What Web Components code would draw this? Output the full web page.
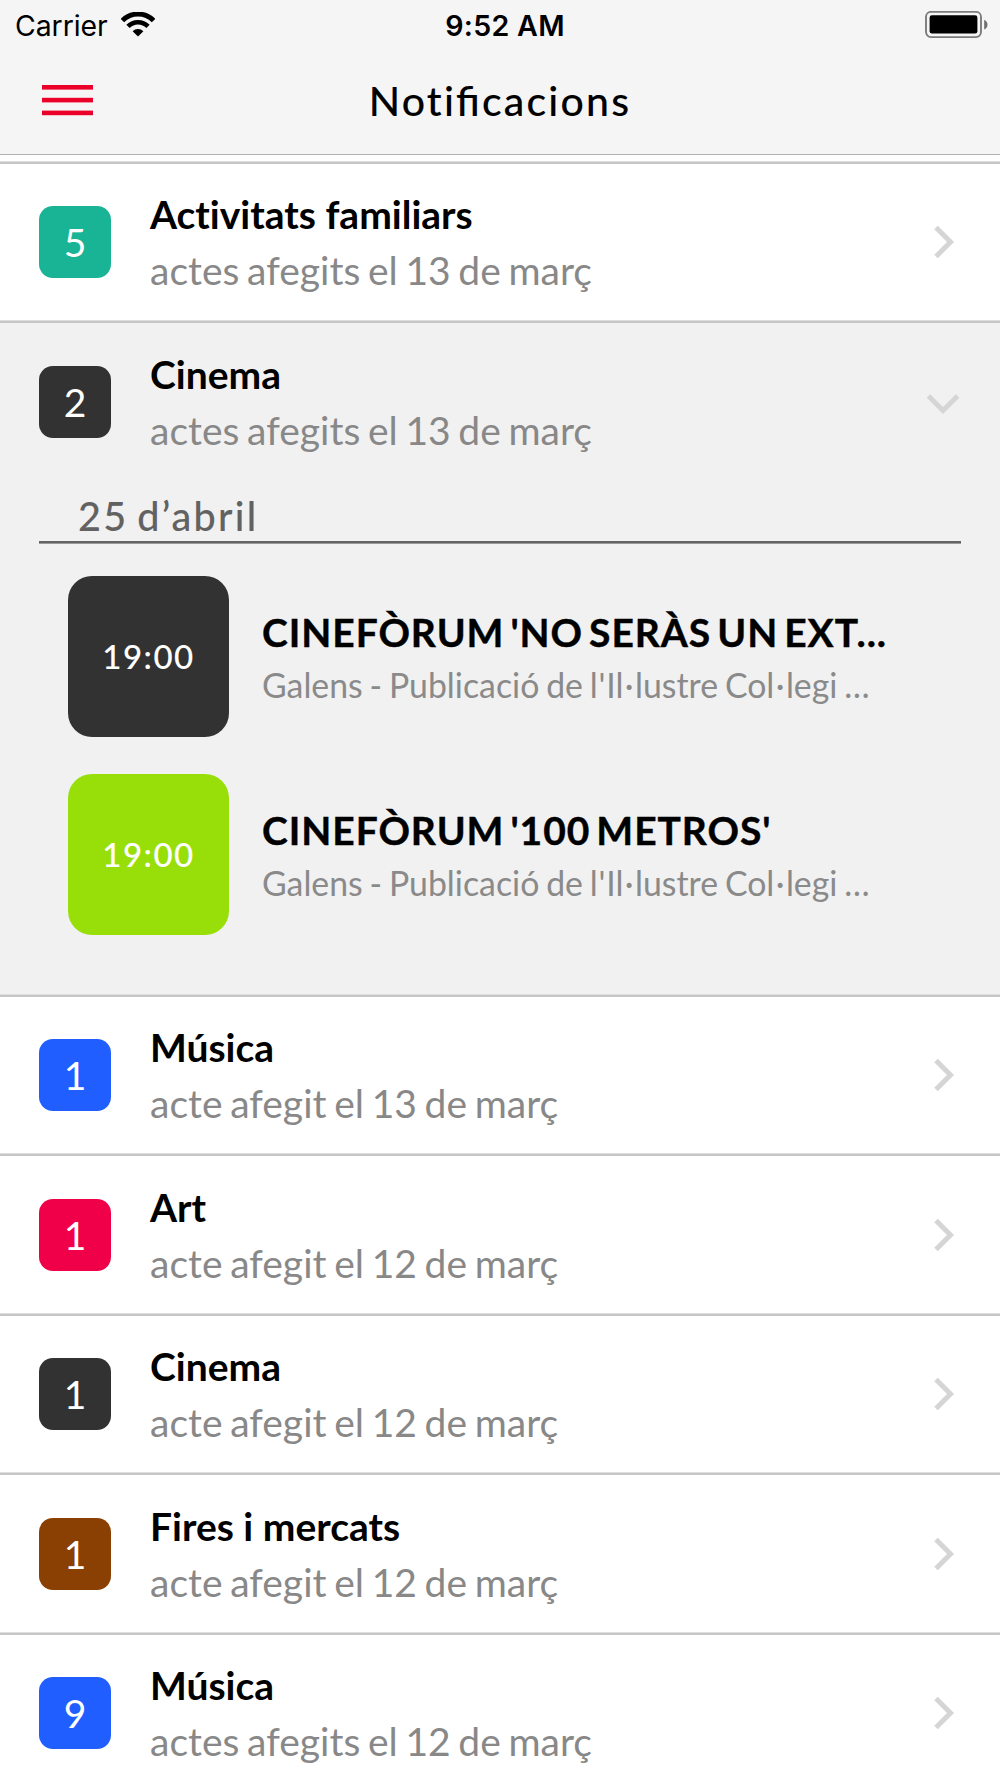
<!DOCTYPE html>
<html lang="ca">
<head>
<meta charset="UTF-8">
<meta name="viewport" content="width=device-width, initial-scale=1.0">
<title>Notificacions</title>
<style>
  body {
    margin: 0;
    height: 1778px;
    overflow: hidden;
    background: #fff;
    font-family: Lato, "Open Sans", sans-serif;
    font-feature-settings: "liga" 0, "locl" 0;
    color: #000;
  }
</style>
</head>
<body>
<app-screen>
  <status-bar slot="top" carrier="Carrier" time="9:52 AM"></status-bar>
  <nav-header slot="top">Noti<span>fi</span>cacions</nav-header>

  <notification-item count="5" color="#18b495" heading="Activitats familiars" detail="actes afegits el 13 de març"></notification-item>
  <notification-item open count="2" color="#323232" heading="Cinema" detail="actes afegits el 13 de març">
    <event-day>25 d’abril</event-day>
    <event-item time="19:00" color="#323232" heading="CINEFÒRUM 'NO SERÀS UN EXT..." place="Galens - Publicació de l'Il·lustre Col·legi …"></event-item>
    <event-item time="19:00" color="#98df0a" heading="CINEFÒRUM '100 METROS'" place="Galens - Publicació de l'Il·lustre Col·legi …"></event-item>
  </notification-item>
  <notification-item count="1" color="#205eff" heading="Música" detail="acte afegit el 13 de març"></notification-item>
  <notification-item count="1" color="#f00048" heading="Art" detail="acte afegit el 12 de març"></notification-item>
  <notification-item count="1" color="#323232" heading="Cinema" detail="acte afegit el 12 de març"></notification-item>
  <notification-item count="1" color="#8a3f03" heading="Fires i mercats" detail="acte afegit el 12 de març"></notification-item>
  <notification-item count="9" color="#205eff" heading="Música" detail="actes afegits el 12 de març"></notification-item>
</app-screen>

<script>
class AppScreen extends HTMLElement {
  constructor() {
    super();
    this.attachShadow({ mode: "open" });
    this.shadowRoot.innerHTML = `
      <style>
        :host { display: block; width: 1000px; }
        header {
          box-sizing: border-box;
          height: 155px;
          background: #f5f5f5;
          border-bottom: 1px solid #b2b2b2;
        }
        main { padding-top: 6px; }
      </style>
      <header><slot name="top"></slot></header>
      <main><slot></slot></main>
    `;
  }
}
customElements.define("app-screen", AppScreen);

class StatusBar extends HTMLElement {
  constructor() {
    super();
    this.attachShadow({ mode: "open" });
    this.shadowRoot.innerHTML = `
      <style>
        :host {
          display: grid;
          grid-template-columns: 1fr auto 1fr;
          align-items: center;
          height: 50px;
          padding: 1px 12px 0 15px;
          margin-bottom: -1px;
          font-family: Inter, "Liberation Sans", sans-serif;
          font-size: 28.4px;
          line-height: 50px;
        }
        .left { display: flex; align-items: center; }
        .carrier { width: 106px; letter-spacing: -0.05px; white-space: nowrap; }
        .time { font-weight: 600; font-size: 28.6px; letter-spacing: 0.3px; padding-left: 7px; }
        .battery { justify-self: end; margin-bottom: 3px; }
        svg { display: block; }
        .left svg { margin-bottom: 2px; }
      </style>
      <div class="left">
        <span class="carrier">${this.getAttribute("carrier")}</span>
        <svg width="34" height="26" viewBox="0 0 34 26">
          <path d="M1.4 8.6 A22 22 0 0 1 32.6 8.6" fill="none" stroke="#000" stroke-width="5"/>
          <path d="M7 14.4 A14 14 0 0 1 27 14.4" fill="none" stroke="#000" stroke-width="4.6"/>
          <path d="M17 24.4 L11.6 19.2 A7.6 7.6 0 0 1 22.4 19.2 Z"/>
        </svg>
      </div>
      <span class="time">${this.getAttribute("time")}</span>
      <svg class="battery" width="64" height="28" viewBox="0 0 64 28">
        <rect x="2" y="0.9" width="55" height="25.2" rx="5" fill="none" stroke="#7c7c7c" stroke-width="1.9"/>
        <rect x="5.6" y="4.3" width="47.8" height="18.3" rx="2.4"/>
        <path d="M60.2 8.8 C64.6 10.8 64.6 16.6 60.2 18.6 Z" fill="#6f6f6f"/>
      </svg>
    `;
  }
}
customElements.define("status-bar", StatusBar);

class NavHeader extends HTMLElement {
  constructor() {
    super();
    this.attachShadow({ mode: "open" });
    this.shadowRoot.innerHTML = `
      <style>
        :host {
          display: grid;
          grid-template-columns: 1fr auto 1fr;
          align-items: center;
          height: 100px;
          padding: 0 42px;
        }
        h1 {
          margin: 0;
          padding-top: 2px;
          font-size: 41px;
          font-weight: 500;
          line-height: 98px;
          letter-spacing: 2.2px;
          -webkit-text-stroke: 0.1px;
        }
        ::slotted(span) { font-feature-settings: "liga" 1; }
        svg { display: block; }
      </style>
      <svg width="51" height="32" viewBox="0 0 51 32" fill="#eb0029">
        <rect y="1" width="51" height="4.6"/>
        <rect y="13.8" width="51" height="4.6"/>
        <rect y="26.6" width="51" height="4.6"/>
      </svg>
      <h1><slot></slot></h1>
    `;
  }
}
customElements.define("nav-header", NavHeader);

class CountBadge extends HTMLElement {
  constructor() {
    super();
    this.attachShadow({ mode: "open" });
    this.shadowRoot.innerHTML = `
      <style>
        :host {
          display: block;
          width: 72px;
          height: 72px;
          border-radius: 14px;
          color: #fff;
          font-size: 39px;
          line-height: 73px;
          text-align: center;
        }
      </style>
      <slot></slot>
    `;
  }
}
customElements.define("count-badge", CountBadge);

class ChevronIcon extends HTMLElement {
  constructor() {
    super();
    this.attachShadow({ mode: "open" });
    const down = this.hasAttribute("down");
    this.shadowRoot.innerHTML = `
      <style>
        :host { display: block; width: 34px; height: 34px; }
        svg { display: block; }
      </style>
      <svg width="34" height="34" viewBox="0 0 34 34" fill="none" stroke="#d5d5d5" stroke-width="5">
        <path d="${down ? "M1.4 10.9 L16 25.5 L30.6 10.9" : "M9 2.5 L23.5 17 L9 31.5"}"/>
      </svg>
    `;
  }
}
customElements.define("chevron-icon", ChevronIcon);

class NotificationItem extends HTMLElement {
  constructor() {
    super();
    this.attachShadow({ mode: "open" });
    const open = this.hasAttribute("open");
    this.shadowRoot.innerHTML = `
      <style>
        :host {
          display: block;
          box-sizing: border-box;
          height: 159.4px;
          border-top: 1px solid #dedede;
          box-shadow: inset 0 2px #c6c6c6;
        }
        :host([open]) { height: 673.6px; background: #f1f1f1; }
        .head {
          display: grid;
          grid-template-columns: 72px 1fr 34px;
          column-gap: 39px;
          align-items: center;
          height: 156px;
          padding: 2.4px 39px 0;
        }
        h2, p { margin: 0; line-height: 56px; white-space: nowrap; }
        h2 { font-size: 39px; font-weight: 700; }
        p { font-size: 39px; color: #888; word-spacing: -2.3px; }
      </style>
      <div class="head">
        <count-badge style="background: ${this.getAttribute("color")}">${this.getAttribute("count")}</count-badge>
        <div>
          <h2>${this.getAttribute("heading")}</h2>
          <p>${this.getAttribute("detail")}</p>
        </div>
        <chevron-icon ${open ? "down" : ""}></chevron-icon>
      </div>
      <slot></slot>
    `;
  }
}
customElements.define("notification-item", NotificationItem);

class EventDay extends HTMLElement {
  constructor() {
    super();
    this.attachShadow({ mode: "open" });
    this.shadowRoot.innerHTML = `
      <style>
        :host {
          display: block;
          margin: 11.6px 39px 33px;
          padding-left: 39px;
          border-bottom: 2px solid #646464;
          box-shadow: 0 1px #9a9a9a;
          color: #626262;
          font-size: 39.5px;
          font-weight: 500;
          line-height: 50px;
          letter-spacing: 2.3px;
          word-spacing: -3.5px;
          -webkit-text-stroke: 0.1px;
        }
      </style>
      <slot></slot>
    `;
  }
}
customElements.define("event-day", EventDay);

class EventItem extends HTMLElement {
  constructor() {
    super();
    this.attachShadow({ mode: "open" });
    // the apostrophe and the middle dot of "l·l" need some air on both sides
    const place = this.getAttribute("place")
      .replace(/'/g, `<span class="apos">'</span>`)
      .replace(/·/g, `<span class="dot">·</span>`);
    this.shadowRoot.innerHTML = `
      <style>
        :host {
          display: flex;
          align-items: center;
          gap: 33px;
          height: 161px;
          margin: 0 68px 37px;
        }
        .time {
          flex: none;
          width: 161px;
          height: 161px;
          border-radius: 24px;
          color: #fff;
          font-size: 33px;
          font-weight: 500;
          line-height: 161px;
          letter-spacing: 1.5px;
          text-align: center;
          -webkit-text-stroke: 0.1px;
          background: ${this.getAttribute("color")};
        }
        h3, p { margin: 0; white-space: nowrap; }
        h3 {
          font-size: 39px;
          font-weight: 700;
          line-height: 56px;
          letter-spacing: 0.95px;
          word-spacing: -4.4px;
          -webkit-text-stroke: 0.4px;
        }
        p {
          font-size: 33.8px;
          line-height: 50px;
          color: #8a8a8a;
          word-spacing: -1.8px;
        }
        .apos { margin: 0 0.8px; }
        .dot { margin: 0 1.4px; }
      </style>
      <div class="time">${this.getAttribute("time")}</div>
      <div>
        <h3>${this.getAttribute("heading")}</h3>
        <p>${place}</p>
      </div>
    `;
  }
}
customElements.define("event-item", EventItem);
</script>
</body>
</html>
